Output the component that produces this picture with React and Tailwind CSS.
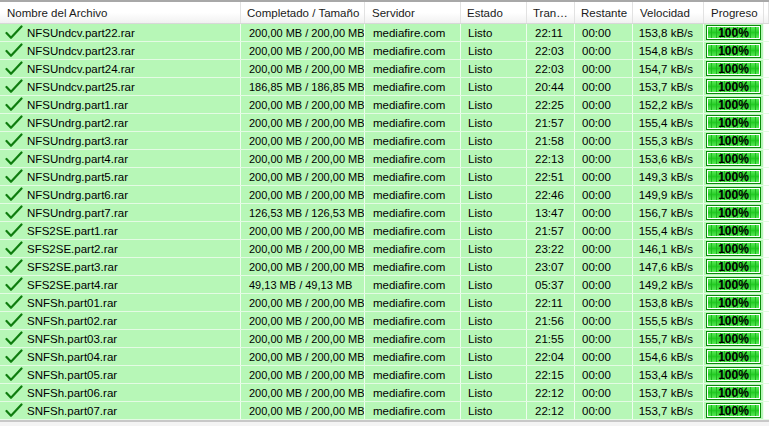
import React from "react";

const rows = [
  ["NFSUndcv.part22.rar", "200,00 MB / 200,00 MB", "22:11", "153,8 kB/s"],
  ["NFSUndcv.part23.rar", "200,00 MB / 200,00 MB", "22:03", "154,8 kB/s"],
  ["NFSUndcv.part24.rar", "200,00 MB / 200,00 MB", "22:03", "154,7 kB/s"],
  ["NFSUndcv.part25.rar", "186,85 MB / 186,85 MB", "20:44", "153,7 kB/s"],
  ["NFSUndrg.part1.rar", "200,00 MB / 200,00 MB", "22:25", "152,2 kB/s"],
  ["NFSUndrg.part2.rar", "200,00 MB / 200,00 MB", "21:57", "155,4 kB/s"],
  ["NFSUndrg.part3.rar", "200,00 MB / 200,00 MB", "21:58", "155,3 kB/s"],
  ["NFSUndrg.part4.rar", "200,00 MB / 200,00 MB", "22:13", "153,6 kB/s"],
  ["NFSUndrg.part5.rar", "200,00 MB / 200,00 MB", "22:51", "149,3 kB/s"],
  ["NFSUndrg.part6.rar", "200,00 MB / 200,00 MB", "22:46", "149,9 kB/s"],
  ["NFSUndrg.part7.rar", "126,53 MB / 126,53 MB", "13:47", "156,7 kB/s"],
  ["SFS2SE.part1.rar", "200,00 MB / 200,00 MB", "21:57", "155,4 kB/s"],
  ["SFS2SE.part2.rar", "200,00 MB / 200,00 MB", "23:22", "146,1 kB/s"],
  ["SFS2SE.part3.rar", "200,00 MB / 200,00 MB", "23:07", "147,6 kB/s"],
  ["SFS2SE.part4.rar", "49,13 MB / 49,13 MB", "05:37", "149,2 kB/s"],
  ["SNFSh.part01.rar", "200,00 MB / 200,00 MB", "22:11", "153,8 kB/s"],
  ["SNFSh.part02.rar", "200,00 MB / 200,00 MB", "21:56", "155,5 kB/s"],
  ["SNFSh.part03.rar", "200,00 MB / 200,00 MB", "21:55", "155,7 kB/s"],
  ["SNFSh.part04.rar", "200,00 MB / 200,00 MB", "22:04", "154,6 kB/s"],
  ["SNFSh.part05.rar", "200,00 MB / 200,00 MB", "22:15", "153,4 kB/s"],
  ["SNFSh.part06.rar", "200,00 MB / 200,00 MB", "22:12", "153,7 kB/s"],
  ["SNFSh.part07.rar", "200,00 MB / 200,00 MB", "22:12", "153,7 kB/s"],
];

const grid =
  "grid grid-cols-[241px_124px_96px_66px_48px_58px_71px_60px_1fr]";

const headers = [
  ["Nombre del Archivo", "pl-[7px]"],
  ["Completado / Tamaño", "pl-[6px]"],
  ["Servidor", "pl-[7px]"],
  ["Estado", "pl-[6px]"],
  ["Tran…", "pl-[6px]"],
  ["Restante", "pl-[6px]"],
  ["Velocidad", "pl-[7px]"],
  ["Progreso", "pl-[7px]"],
  ["", ""],
];

const cell =
  "flex items-center overflow-hidden whitespace-nowrap border-r border-[#eefdee]";

function Check() {
  return (
    <svg width="18" height="15" viewBox="0 0 18 15" className="shrink-0 -mt-[2px]">
      <path
        d="M1.5 8 L6 12.8 L16.5 1.5"
        fill="none"
        stroke="#0f7d0f"
        strokeWidth="2.2"
        strokeLinecap="round"
        strokeLinejoin="round"
      />
    </svg>
  );
}

function Progress() {
  return (
    <div className="relative h-[15px] w-[55px] border border-[#0a8a0a] bg-white p-[1px]">
      <div className="flex h-full w-full gap-[1px] bg-[#1fb81f]">
        {Array.from({ length: 12 }).map((_, i) => (
          <div
            key={i}
            className="h-full flex-1 bg-gradient-to-b from-[#55ea55] via-[#22cc22] to-[#55ea55]"
          />
        ))}
      </div>
      <div className="absolute inset-0 flex items-center justify-center text-[12px] font-bold leading-none text-black">
        100%
      </div>
    </div>
  );
}

export default function App() {
  return (
    <div
      className="h-[426px] w-[769px] overflow-hidden bg-white text-[11px] text-black"
      style={{ fontFamily: '"Liberation Sans", Arial, sans-serif' }}
    >
      <div className="border-t-2 border-[#a8a8a8]" />
      <div
        className={`${grid} h-[22px] border-b border-[#d8d8d8] bg-gradient-to-b from-white via-white to-[#f1f1f1]`}
      >
        {headers.map(([t, p], i) => (
          <div
            key={i}
            className={`flex items-center overflow-hidden whitespace-nowrap border-r border-[#e2e2e2] pt-[3px] ${p} text-[11.5px] text-[#1a1a1a]`}
          >
            {t}
          </div>
        ))}
      </div>
      {rows.map((r, i) => (
        <div
          key={i}
          className={`${grid} h-[18px] overflow-hidden border-b border-[#e4fbe4] bg-[#b7f7b7] text-[11px]`}
        >
          <div className={`${cell} gap-[4px] pl-[5px] pt-[2px]`}>
            <Check />
            <span className="text-[11.5px]">{r[0]}</span>
          </div>
          <div className={`${cell} pl-[8px] pt-[2px]`}>{r[1]}</div>
          <div className={`${cell} pl-[8px] pt-[2px] text-[11.5px]`}>mediafire.com</div>
          <div className={`${cell} pl-[7px] pt-[2px] text-[11.5px]`}>Listo</div>
          <div className={`${cell} pl-[8px] pt-[2px] text-[11.5px]`}>{r[2]}</div>
          <div className={`${cell} pl-[7px] pt-[2px] text-[11.5px]`}>00:00</div>
          <div className={`${cell} justify-end pr-[10px] pt-[2px] text-[11.5px]`}>{r[3]}</div>
          <div className={`${cell} pl-[2px]`}>
            <Progress />
          </div>
          <div className="bg-white" />
        </div>
      ))}
      <div className="h-[2px] bg-[#c8c8c8]" />
      <div className="h-[4px] bg-[#f4f4f4]" />
    </div>
  );
}
